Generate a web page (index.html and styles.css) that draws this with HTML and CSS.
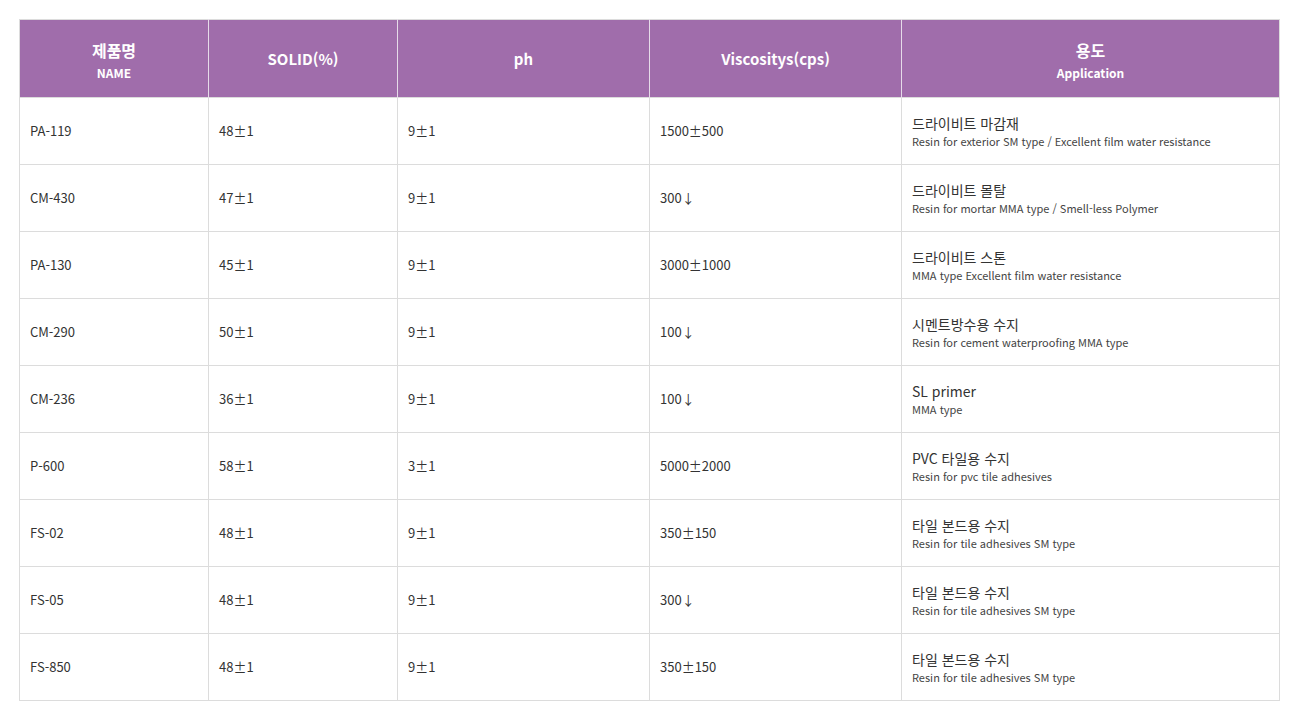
FILE: index.html
```html
<!DOCTYPE html>
<html lang="ko">
<head>
<meta charset="utf-8">
<link rel="stylesheet" href="styles.css">
</head>
<body>
<div class="wrap">
<table class="spec">
  <colgroup>
    <col class="c15"><col class="c15"><col class="c20"><col class="c20"><col class="c30">
  </colgroup>
  <thead>
    <tr>
      <th><span class="ko">제품명</span><span class="en">NAME</span></th>
      <th>SOLID(%)</th>
      <th>ph</th>
      <th>Viscositys(cps)</th>
      <th><span class="ko">용도</span><span class="en">Application</span></th>
    </tr>
  </thead>
  <tbody>
    <tr><td>PA-119</td><td>48±1</td><td>9±1</td><td>1500±500</td><td><span class="app">드라이비트 마감재</span><span class="sub">Resin for exterior SM type / Excellent film water resistance</span></td></tr>
    <tr><td>CM-430</td><td>47±1</td><td>9±1</td><td>300↓</td><td><span class="app">드라이비트 몰탈</span><span class="sub">Resin for mortar MMA type / Smell-less Polymer</span></td></tr>
    <tr><td>PA-130</td><td>45±1</td><td>9±1</td><td>3000±1000</td><td><span class="app">드라이비트 스톤</span><span class="sub">MMA type Excellent film water resistance</span></td></tr>
    <tr><td>CM-290</td><td>50±1</td><td>9±1</td><td>100↓</td><td><span class="app">시멘트방수용 수지</span><span class="sub">Resin for cement waterproofing MMA type</span></td></tr>
    <tr><td>CM-236</td><td>36±1</td><td>9±1</td><td>100↓</td><td><span class="app">SL primer</span><span class="sub">MMA type</span></td></tr>
    <tr><td>P-600</td><td>58±1</td><td>3±1</td><td>5000±2000</td><td><span class="app">PVC 타일용 수지</span><span class="sub">Resin for pvc tile adhesives</span></td></tr>
    <tr><td>FS-02</td><td>48±1</td><td>9±1</td><td>350±150</td><td><span class="app">타일 본드용 수지</span><span class="sub">Resin for tile adhesives SM type</span></td></tr>
    <tr><td>FS-05</td><td>48±1</td><td>9±1</td><td>300↓</td><td><span class="app">타일 본드용 수지</span><span class="sub">Resin for tile adhesives SM type</span></td></tr>
    <tr><td>FS-850</td><td>48±1</td><td>9±1</td><td>350±150</td><td><span class="app">타일 본드용 수지</span><span class="sub">Resin for tile adhesives SM type</span></td></tr>
  </tbody>
</table>
</div>
</body>
</html>
```
FILE: styles.css
```css
html, body {
  margin: 0;
  padding: 0;
  background: #fff;
}
body {
  font-family: "Noto Sans CJK KR", "Noto Sans", "Open Sans", sans-serif;
  color: #333;
}
.wrap {
  padding: 19px 0 0 19px;
}
.spec {
  width: 1261px;
  border-collapse: collapse;
  table-layout: fixed;
  border: 1px solid #dcdcdc;
}
.c15 { width: 15%; }
.c20 { width: 20%; }
.c30 { width: 30%; }
.spec th {
  background: #a06dab;
  color: #fff;
  font-weight: bold;
  font-size: 15px;
  height: 77px;
  padding: 0;
  text-align: center;
  vertical-align: middle;
  border-left: 1px solid #e6dbe9;
  line-height: 1.2;
}
.spec th:first-child { border-left: none; }
.spec th .ko {
  display: block;
  font-size: 16px;
  line-height: 22px;
  margin-top: 2px;
}
.spec th .en {
  display: block;
  font-size: 12px;
  line-height: 16px;
  margin-top: 4px;
}
.spec td {
  height: 66px;
  padding: 0 10px;
  font-size: 13px;
  color: #333;
  border: 1px solid #dcdcdc;
  vertical-align: middle;
  line-height: 1.3;
}
.spec td .app {
  display: block;
  font-size: 14px;
  line-height: 20px;
}
.spec td .sub {
  display: block;
  font-size: 11px;
  line-height: 17px;
  color: #444;
}
```
